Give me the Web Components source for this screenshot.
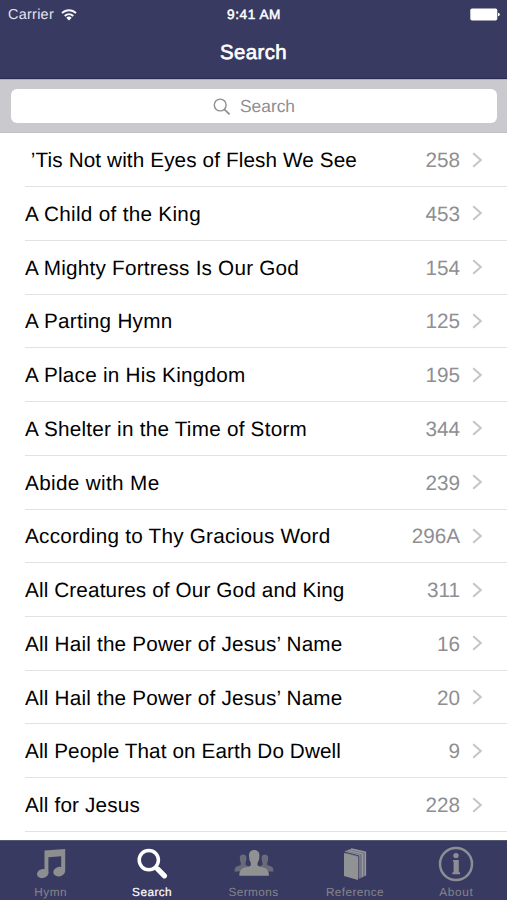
<!DOCTYPE html>
<html lang="en"><head><meta charset="utf-8"><title>Search</title>
<style>html,body{margin:0;height:100%;overflow:hidden;background:#fff}</style></head>
<body><hymn-app></hymn-app>
<script>
const define = (name, html, ready) => customElements.define(name, class extends HTMLElement {
  constructor() {
    super();
    this.attachShadow({mode: 'open'});
  }
  connectedCallback() {
    this.shadowRoot.innerHTML = html;
    if (ready) ready(this, this.shadowRoot);
  }
});

// Spreads the letters of a label so that it takes the given width.
const fit = (el, width) => {
  const n = el.textContent.trim().length || el.getRootNode().host.textContent.trim().length;
  let spacing = 0.01;
  for (let i = 0; width && n && i < 3; i++) {
    el.style.letterSpacing = spacing + 'px';
    spacing += (width - el.getBoundingClientRect().width) / n;
  }
  el.style.letterSpacing = spacing + 'px';
};

define('status-bar', `<style>
:host{display:grid;grid-template-columns:1fr auto 1fr;align-items:center;height:28px;padding:0 7px 0 8px;color:#fff;font-size:14.4px}
.l{display:flex;align-items:center;gap:7px;color:#e4e4ee}.t{font-size:13.6px;-webkit-text-stroke:.5px #fff;white-space:nowrap}
.b{justify-self:end}svg{display:block}.t,.l span{line-height:28px}.l span{padding-top:1px}
</style><div class="l"><span id="c">Carrier</span><svg width="16" height="12" viewBox="0 0 16 12" fill="none" stroke="#f4f4fa" stroke-width="1.9"><path d="M1 4.2C5 .2 11 .2 15 4.2M3.7 7C6.2 4.6 9.8 4.6 12.3 7"/><path d="M5.3 8.7Q8 6.5 10.7 8.7L8 11.5Z" fill="#fff" stroke="none"/></svg></div>
<div class="t"><span id="t">9:41 AM</span></div>
<svg class="b" width="30" height="13" viewBox="0 0 30 13" fill="#fff"><rect x=".3" y=".5" width="27" height="12" rx="1.8"/><path d="M28 4.7Q29.8 4.9 29.8 6.5T28 8.3Z"/></svg>`,
(h, r) => { fit(r.getElementById('c'), 46); fit(r.getElementById('t'), 54); });

define('nav-bar', `<style>
:host{display:flex;align-items:center;justify-content:center;height:50px;color:#fff;font-size:20.4px;-webkit-text-stroke:.65px #fff;line-height:50px;border-bottom:1px solid #2b2b50}
span{display:block}
</style><span><slot></slot></span>`, (h, r) => fit(r.querySelector('span'), 67));

define('search-field', `<style>
:host{display:block;height:54px;box-sizing:border-box;background:#c9c9ce;border-top:1px solid #aeaec0;border-bottom:1px solid #c0c0c3;padding:9px 10px 9px 11px}
div{height:34px;border-radius:6px;background:#fff;display:flex;align-items:center;justify-content:center;gap:9px;color:#8e8e93;font-size:17.4px}
svg{display:block;margin-top:1px}span{line-height:34px}
</style><div><svg width="18" height="18" viewBox="0 0 18 18" fill="none" stroke="#8e8e93" stroke-width="1.4"><circle cx="7.2" cy="7" r="5.9"/><path d="M11.3 11.3L16.6 16.3" stroke-width="1.8"/></svg><span><slot></slot></span></div>`,
(h, r) => fit(r.querySelector('span'), 55));

define('hymn-row', `<style>
:host{display:flex;align-items:center;height:53.74px;margin-left:25px;padding-right:24px;box-sizing:border-box;border-bottom:1px solid #e2e2e4;font-size:20.7px;color:#000;white-space:pre}
.n{margin-left:auto;color:#8e8e93;padding-top:3px}.s{padding-top:3px}svg{display:block;margin-left:12px}
</style><span class="s"><slot></slot></span><span class="n"></span><svg width="11" height="16" viewBox="0 0 11 16" fill="none" stroke="#c4c4c9" stroke-width="2"><path d="M1.2 1.3L8.8 8L1.2 14.7"/></svg>`,
(h, r) => { r.querySelector('.n').textContent = h.getAttribute('number'); fit(r.querySelector('.s'), +h.getAttribute('width')); });

define('tab-item', `<style>
:host{display:flex;flex-direction:column;align-items:center;flex:1;color:#85858b;font-size:11.8px}
:host([active]){color:#fff}
.i{height:44px;display:flex;align-items:center}::slotted(svg){display:block}span{line-height:14px;margin-top:-1px;white-space:nowrap}
:host([active]) span{-webkit-text-stroke:.2px #fff}
</style><div class="i"><slot name="icon"></slot></div><span></span>`,
(h, r) => { const s = r.querySelector('span'); s.textContent = h.getAttribute('label'); fit(s, +h.getAttribute('width')); });

define('tab-bar', `<style>:host{display:flex;height:60px;box-sizing:border-box;background:#393a61;border-top:1px solid #565675;padding-top:1px}</style>
<tab-item label="Hymn" width="33"><svg slot="icon" width="32" height="32" viewBox="0 0 32 32" fill="#8d8e90"><path d="M9.5 2.6L30.2 1V23H26.2V8.2L13.4 9.2V25.5H9.5Z"/><ellipse cx="7.7" cy="25.5" rx="5.8" ry="4.5" transform="rotate(-14 7.7 25.5)"/><ellipse cx="24.2" cy="23.6" rx="6" ry="4.7" transform="rotate(-14 24.2 23.6)"/></svg></tab-item>
<tab-item active label="Search" width="40"><svg slot="icon" width="32" height="32" viewBox="0 0 32 32" fill="none" stroke="#fff"><circle cx="12.8" cy="12.1" r="9.6" stroke-width="3.5"/><path d="M19.5 19L22 21.4" stroke-width="3.6"/><path d="M21.8 21.2L28.4 27.8" stroke-width="5.2" stroke-linecap="round"/></svg></tab-item>
<tab-item label="Sermons" width="50"><svg slot="icon" width="40" height="32" viewBox="0 0 40 32"><g fill="#6a6b7a"><path d="M5.8 9.5C5.8 5.6 12.4 5.6 12.4 9.5Q12.4 13 11.6 14.5V17L15 18.5V23.5H.6Q.4 18.8 3.4 18.2L6.8 17V14.5Q5.8 13 5.8 9.5Z"/><path d="M34.2 9.5C34.2 5.6 27.6 5.6 27.6 9.5Q27.6 13 28.4 14.5V17L25 18.5V23.5H39.4Q39.6 18.8 36.6 18.2L33.2 17V14.5Q34.2 13 34.2 9.5Z"/></g><path fill="#909192" d="M15 7C15 .2 25.4.2 25.4 7Q25.6 12 23.6 14.8V17.4Q25 18.6 29.5 19.6Q34.9 20.8 34.9 27.8H5.3Q5.3 20.8 10.7 19.6Q15.4 18.6 16.8 17.4V14.8Q14.8 12 15 7Z"/></svg></tab-item>
<tab-item label="Reference" width="58"><svg slot="icon" width="26" height="34" viewBox="0 0 26 34"><path d="M2.8 4.3L10 1.2L24.2 4.5V28.6L17 32Z" fill="#777887"/><path d="M2 6L16 9.7V33L2 28.9Z" fill="#919293"/><path d="M3 4.5L17.4 8.2V31.2M6 3.3L20.5 6.8V29.5M9 2L23.4 5.2V28.4" fill="none" stroke="#9c9ca0" stroke-width="1"/><path d="M3.2 5.2L16.9 8.8V31.7" fill="none" stroke="#393a61" stroke-width=".9"/></svg></tab-item>
<tab-item label="About" width="34"><svg slot="icon" width="36" height="36" viewBox="0 0 36 36"><circle cx="18" cy="18" r="16" fill="none" stroke="#8d8e95" stroke-width="2.5"/><g fill="#8d8e95"><circle cx="18" cy="9.6" r="2.7"/><path d="M15 13.9H20.8V26.3H22V28.3H14.4V26.3H15.6V15.8H15Z"/></g></svg></tab-item>`);

define('hymn-app', `<style>
:host{display:flex;flex-direction:column;width:507px;height:900px;background:#fff;overflow:hidden;font-family:"Liberation Sans",Arial,sans-serif;text-rendering:geometricPrecision}
header{background:#393a61}main{flex:1;min-height:0;overflow:hidden;padding-top:.4px}
</style><header><status-bar></status-bar><nav-bar>Search</nav-bar></header><search-field>Search</search-field>
<main>
<hymn-row number="258" width="332"> ’Tis Not with Eyes of Flesh We See</hymn-row>
<hymn-row number="453" width="176">A Child of the King</hymn-row>
<hymn-row number="154" width="274">A Mighty Fortress Is Our God</hymn-row>
<hymn-row number="125" width="147.5">A Parting Hymn</hymn-row>
<hymn-row number="195" width="220.5">A Place in His Kingdom</hymn-row>
<hymn-row number="344" width="282">A Shelter in the Time of Storm</hymn-row>
<hymn-row number="239" width="134.5">Abide with Me</hymn-row>
<hymn-row number="296A" width="305.5">According to Thy Gracious Word</hymn-row>
<hymn-row number="311" width="319.5">All Creatures of Our God and King</hymn-row>
<hymn-row number="16" width="317.5">All Hail the Power of Jesus’ Name</hymn-row>
<hymn-row number="20" width="317.5">All Hail the Power of Jesus’ Name</hymn-row>
<hymn-row number="9" width="316">All People That on Earth Do Dwell</hymn-row>
<hymn-row number="228" width="115">All for Jesus</hymn-row>
</main><tab-bar></tab-bar>`);
</script></body></html>
